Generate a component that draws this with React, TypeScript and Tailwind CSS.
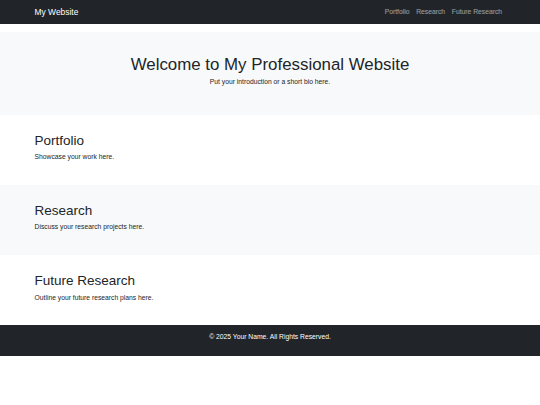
export default function App() {
  const sections = [
    { title: "Portfolio", text: "Showcase your work here.", bg: "bg-white" },
    { title: "Research", text: "Discuss your research projects here.", bg: "bg-[#f8f9fa]" },
    { title: "Future Research", text: "Outline your future research plans here.", bg: "bg-white" },
  ];

  return (
    <div className="min-h-screen bg-white text-[#212529] font-['Liberation_Sans',Arial,sans-serif]">
      {/* Navbar */}
      <nav className="bg-[#212529] py-[3.375px]">
        <div className="mx-auto w-[481px] px-[5.06px] flex items-center justify-between">
          <a className="text-white text-[8.44px] leading-[1.5] pt-[2.6px] pb-[1.6px]">My Website</a>
          <ul className="flex items-center">
            {["Portfolio", "Research", "Future Research"].map((l) => (
              <li key={l}>
                <a className="block px-[3.375px] pt-[0.5px] text-[6.75px] leading-[1.5] text-white/55">{l}</a>
              </li>
            ))}
          </ul>
        </div>
      </nav>

      {/* Hero */}
      <header className="mt-[8.44px] bg-[#f8f9fa] pt-[22.6px] pb-[27.2px]">
        <div className="mx-auto w-[481px] px-[5.06px] text-center">
          <h1 className="text-[16.875px] leading-[1.2] font-normal mb-[2.4px]">
            Welcome to My Professional Website
          </h1>
          <p className="text-[6.75px] leading-[1.5]">Put your introduction or a short bio here.</p>
        </div>
      </header>

      {/* Sections */}
      {sections.map((s) => (
        <section key={s.title} className={`${s.bg} pt-[18px] pb-[22.5px]`}>
          <div className="mx-auto w-[481px] px-[5.06px]">
            <h2 className="text-[13.5px] leading-[1.2] font-normal mb-[3.375px]">{s.title}</h2>
            <p className="text-[6.75px] leading-[1.5]">{s.text}</p>
          </div>
        </section>
      ))}

      {/* Footer */}
      <footer className="bg-[#212529] text-white text-center pt-[7.25px] pb-[13px]">
        <p className="text-[6.75px] leading-[1.5]">© 2025 Your Name. All Rights Reserved.</p>
      </footer>
    </div>
  );
}
